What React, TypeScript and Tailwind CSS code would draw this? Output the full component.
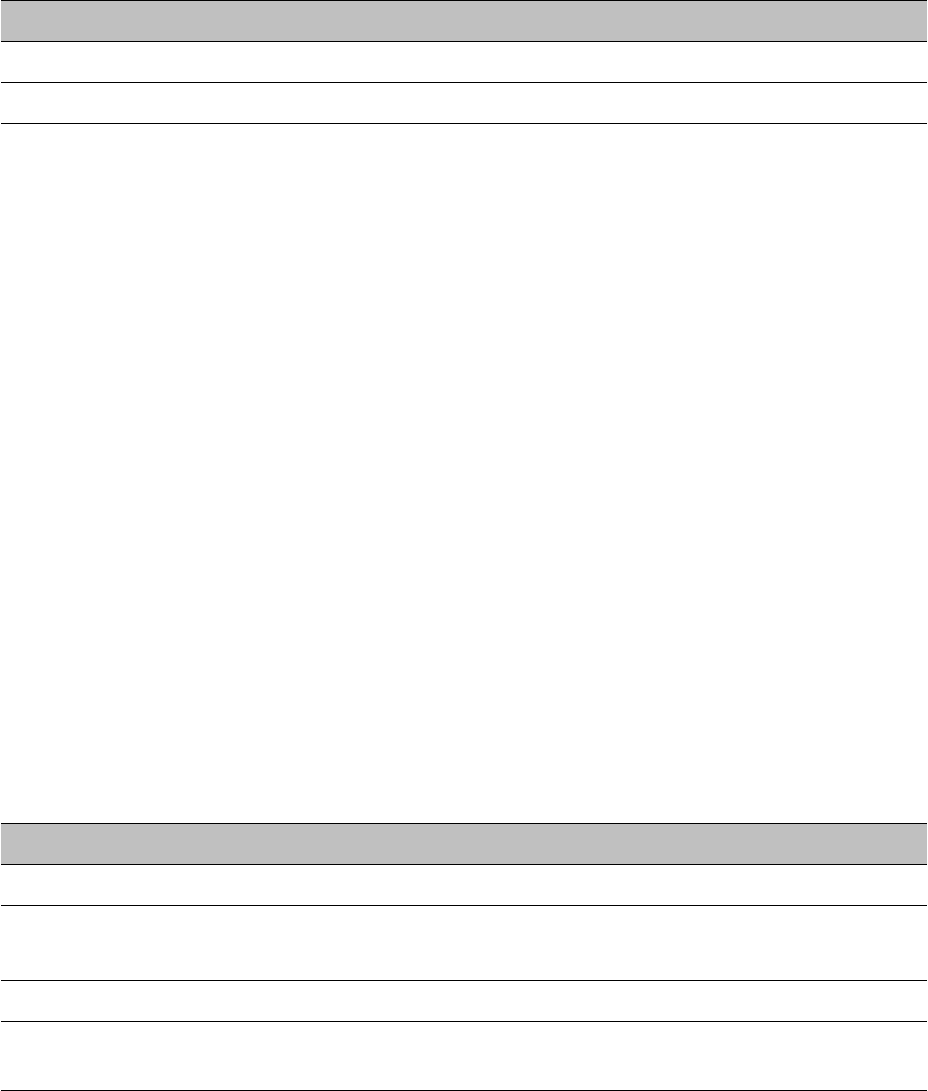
const Table = ({ rows, className = "" }: { rows: number[]; className?: string }) => {
  return (
    <div className={`border-t border-black ${className}`}>
      {/* header row */}
      <div className="h-[41px] bg-[#c0c0c0] border-b border-black"></div>
      {rows.map((h, i) => (
        <div key={i} className="border-b border-black bg-white" style={{ height: h + 1 }}></div>
      ))}
    </div>
  );
};

export default function App() {
  return (
    <div className="w-[928px] h-[1091px] bg-white overflow-hidden pl-px pr-px font-['Liberation_Sans',sans-serif]">
      <Table rows={[40, 40]} />
      <Table rows={[40, 74, 40, 68]} className="mt-[699px]" />
    </div>
  );
}
